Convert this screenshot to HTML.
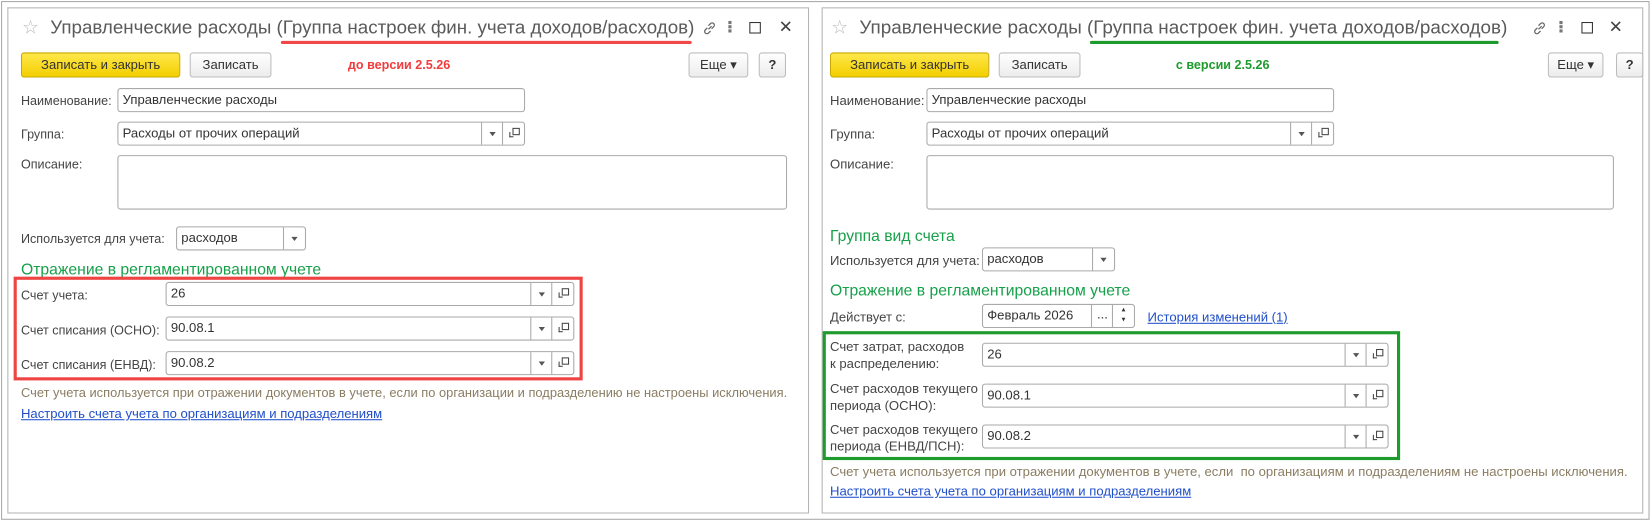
<!DOCTYPE html>
<html><head><meta charset="utf-8">
<style>
html,body{margin:0;padding:0;background:#fff;width:1651px;height:523px;overflow:hidden}
#w{position:absolute;left:0;top:0;width:1575px;height:500px;transform:scale(1.048);transform-origin:0 0;font-family:"Liberation Sans",Arial,sans-serif;font-size:12px;color:#444}
.a{position:absolute;white-space:nowrap}
.outer{position:absolute;left:1px;top:1px;width:1571px;height:493px;border:1px solid #a8a8a8}
.panel{position:absolute;top:7px;height:481px;border:1px solid #b4b4b4;background:#fff}
.title{font-size:18px;color:#5a5a5a;top:16px}
.btn{position:absolute;border:1px solid #bcbcbc;border-radius:3px;background:linear-gradient(#fff,#ececec);text-align:center;line-height:22px;font-size:12.5px;color:#333;box-sizing:border-box;height:24px}
.yb{background:linear-gradient(#ffe74a,#f2cf00);border-color:#c9a800;color:#333}
.inp{position:absolute;height:23px;border:1px solid #a9a9a9;border-radius:3px;box-sizing:border-box;background:#fff;line-height:21px;padding-left:4px;font-size:12.5px;color:#333}
.dd{position:absolute;top:0;bottom:0;width:20px;border-left:1px solid #a9a9a9}
.dd:after{content:"";position:absolute;left:7px;top:9px;border-left:3px solid transparent;border-right:3px solid transparent;border-top:4px solid #555}
.op{position:absolute;top:0;bottom:0;width:20px;border-left:1px solid #a9a9a9}
.op:before{content:"";position:absolute;left:9px;top:5px;width:5px;height:5px;border:1px solid #444}
.op:after{content:"";position:absolute;left:6px;top:9px;width:3px;height:4px;border-left:1px solid #444;border-bottom:1px solid #444}
.lbl{font-size:12.5px;color:#444}
.L .lbl{font-size:12px}
.green{color:#17a04a;font-size:15px}
.note{color:#8a7d62;font-size:12.5px}
.link{color:#1f4fc9;text-decoration:underline;font-size:12.5px}
</style></head><body><div id="w">
<div class="outer"></div>

<!-- LEFT PANEL -->
<div class="L">
<div class="panel" style="left:7px;width:763px"></div>
<div class="a" style="left:21px;top:16px;font-size:18px;color:#bbb">☆</div>
<div class="a title" style="left:48px;font-size:17.9px">Управленческие расходы (Группа настроек фин. учета доходов/расходов)</div>
<div class="a" style="left:268px;top:39px;width:392px;height:3px;background:#f04848;border-radius:2px"></div>
<svg class="a" style="left:669px;top:19px" width="16" height="16" viewBox="0 0 16 16"><path d="M7 9l3-3M6 7.5L4 9.5a2 2 0 0 0 3 3l2-2M10 8.5l2-2a2 2 0 0 0-3-3L7 5.5" stroke="#666" fill="none" stroke-width="1.2"/></svg>
<div class="a" style="left:695px;top:20px;width:3px;height:3px;background:#777;box-shadow:0 4px #777,0 8px #777"></div>
<div class="a" style="left:715px;top:21px;width:9px;height:9px;border:1px solid #333"></div>
<div class="a" style="left:743px;top:16px;font-size:16px;color:#444">✕</div>

<div class="btn yb" style="left:20px;top:50px;width:152px">Записать и закрыть</div>
<div class="btn" style="left:181px;top:50px;width:78px">Записать</div>
<div class="a" style="left:332px;top:55px;color:#f03c3c;font-weight:bold;font-size:12px">до версии 2.5.26</div>
<div class="btn" style="left:657px;top:50px;width:57px">Еще ▾</div>
<div class="btn" style="left:724px;top:50px;width:26px;font-weight:bold">?</div>

<div class="a lbl" style="left:20px;top:89px">Наименование:</div>
<div class="inp" style="left:112px;top:84px;width:389px">Управленческие расходы</div>
<div class="a lbl" style="left:20px;top:121px">Группа:</div>
<div class="inp" style="left:112px;top:116px;width:389px">Расходы от прочих операций<div class="dd" style="right:20px"></div><div class="op" style="right:0"></div></div>
<div class="a lbl" style="left:20px;top:150px">Описание:</div>
<div class="inp" style="left:112px;top:148px;width:639px;height:52px"></div>
<div class="a lbl" style="left:20px;top:221px">Используется для учета:</div>
<div class="inp" style="left:168px;top:216px;width:124px">расходов<div class="dd" style="right:0"></div></div>
<div class="a green" style="left:20px;top:249px">Отражение в регламентированном учете</div>
<div class="a" style="left:13px;top:264px;width:537px;height:93px;border:3px solid #ef4444"></div>
<div class="a lbl" style="left:20px;top:275px">Счет учета:</div>
<div class="inp" style="left:158px;top:269px;width:390px">26<div class="dd" style="right:20px"></div><div class="op" style="right:0"></div></div>
<div class="a lbl" style="left:20px;top:308px">Счет списания (ОСНО):</div>
<div class="inp" style="left:158px;top:302px;width:390px">90.08.1<div class="dd" style="right:20px"></div><div class="op" style="right:0"></div></div>
<div class="a lbl" style="left:20px;top:341px">Счет списания (ЕНВД):</div>
<div class="inp" style="left:158px;top:335px;width:390px">90.08.2<div class="dd" style="right:20px"></div><div class="op" style="right:0"></div></div>
<div class="a note" style="left:20px;top:368px;font-size:12.3px">Счет учета используется при отражении документов в учете, если по организации и подразделению не настроены исключения.</div>
<div class="a link" style="left:20px;top:388px">Настроить счета учета по организациям и подразделениям</div>
</div>

<!-- RIGHT PANEL -->
<div class="panel" style="left:784px;width:782px"></div>
<div class="a" style="left:793px;top:16px;font-size:18px;color:#bbb">☆</div>
<div class="a title" style="left:820px">Управленческие расходы (Группа настроек фин. учета доходов/расходов)</div>
<div class="a" style="left:1040px;top:39px;width:390px;height:3px;background:#1f9a2c;border-radius:2px"></div>
<svg class="a" style="left:1461px;top:19px" width="16" height="16" viewBox="0 0 16 16"><path d="M7 9l3-3M6 7.5L4 9.5a2 2 0 0 0 3 3l2-2M10 8.5l2-2a2 2 0 0 0-3-3L7 5.5" stroke="#666" fill="none" stroke-width="1.2"/></svg>
<div class="a" style="left:1488px;top:20px;width:3px;height:3px;background:#777;box-shadow:0 4px #777,0 8px #777"></div>
<div class="a" style="left:1509px;top:21px;width:9px;height:9px;border:1px solid #333"></div>
<div class="a" style="left:1535px;top:16px;font-size:16px;color:#444">✕</div>

<div class="btn yb" style="left:792px;top:50px;width:152px">Записать и закрыть</div>
<div class="btn" style="left:953px;top:50px;width:78px">Записать</div>
<div class="a" style="left:1122px;top:55px;color:#1f9a2c;font-weight:bold;font-size:12px">с версии 2.5.26</div>
<div class="btn" style="left:1477px;top:50px;width:53px">Еще ▾</div>
<div class="btn" style="left:1542px;top:50px;width:26px;font-weight:bold">?</div>

<div class="a lbl" style="left:792px;top:89px">Наименование:</div>
<div class="inp" style="left:884px;top:84px;width:389px">Управленческие расходы</div>
<div class="a lbl" style="left:792px;top:121px">Группа:</div>
<div class="inp" style="left:884px;top:116px;width:389px">Расходы от прочих операций<div class="dd" style="right:20px"></div><div class="op" style="right:0"></div></div>
<div class="a lbl" style="left:792px;top:150px">Описание:</div>
<div class="inp" style="left:884px;top:148px;width:656px;height:52px"></div>
<div class="a green" style="left:792px;top:217px">Группа вид счета</div>
<div class="a lbl" style="left:792px;top:242px">Используется для учета:</div>
<div class="inp" style="left:937px;top:236px;width:127px">расходов<div class="dd" style="right:0"></div></div>
<div class="a green" style="left:792px;top:269px">Отражение в регламентированном учете</div>
<div class="a lbl" style="left:792px;top:296px">Действует с:</div>
<div class="inp" style="left:937px;top:290px;width:146px">Февраль 2026<div class="a" style="right:20px;top:0;bottom:0;width:20px;border-left:1px solid #a9a9a9;text-align:center;line-height:19px">...</div><div class="a" style="right:0;top:0;bottom:0;width:20px;border-left:1px solid #a9a9a9;font-size:7px;line-height:10px;text-align:center">▴<br>▾</div></div>
<div class="a link" style="left:1095px;top:296px">История изменений (1)</div>
<div class="a" style="left:785px;top:316px;width:545px;height:117px;border:3px solid #1f9a2c"></div>
<div class="a lbl" style="left:792px;top:324px;line-height:15.5px">Счет затрат, расходов<br>к распределению:</div>
<div class="inp" style="left:937px;top:327px;width:388px">26<div class="dd" style="right:20px"></div><div class="op" style="right:0"></div></div>
<div class="a lbl" style="left:792px;top:364px;line-height:15.5px">Счет расходов текущего<br>периода (ОСНО):</div>
<div class="inp" style="left:937px;top:366px;width:388px">90.08.1<div class="dd" style="right:20px"></div><div class="op" style="right:0"></div></div>
<div class="a lbl" style="left:792px;top:403px;line-height:15.5px">Счет расходов текущего<br>периода (ЕНВД/ПСН):</div>
<div class="inp" style="left:937px;top:405px;width:388px">90.08.2<div class="dd" style="right:20px"></div><div class="op" style="right:0"></div></div>
<div class="a note" style="left:792px;top:443px">Счет учета используется при отражении документов в учете, если&nbsp; по организациям и подразделениям не настроены исключения.</div>
<div class="a link" style="left:792px;top:462px">Настроить счета учета по организациям и подразделениям</div>
</div></body></html>
